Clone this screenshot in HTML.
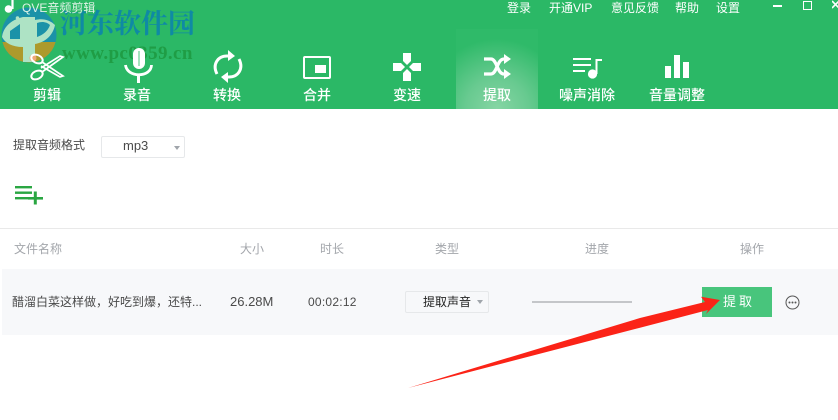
<!DOCTYPE html>
<html lang="zh">
<head>
<meta charset="utf-8">
<style>
html,body{margin:0;padding:0;background:#fff;}
#p{position:relative;width:838px;height:420px;overflow:hidden;background:#fff;font-family:"Liberation Sans","Noto Sans CJK SC",sans-serif;}
#p div,#p svg{position:absolute;}
.t{white-space:nowrap;line-height:1;}
.top{top:1px;font-size:12px;color:#fff;line-height:14px;white-space:nowrap;}
.nav{top:88px;width:80px;text-align:center;font-size:14px;font-weight:500;color:#fff;line-height:15px;white-space:nowrap;}
.th{top:242px;font-size:12px;color:#a3a6ab;line-height:14px;white-space:nowrap;}
.td{font-size:12px;color:#4a4a4a;line-height:14px;white-space:nowrap;}
</style>
</head>
<body>
<div id="p">
<div style="left:0;top:0;width:838px;height:109px;background:#2bb866;"></div>
<div style="left:456px;top:29px;width:82px;height:80px;background:radial-gradient(ellipse 70px 70px at 50% 100%,#86d5a4 0%,#68ca90 45%,#2fba69 100%);"></div>

<!-- logo -->
<svg style="left:0;top:6px" width="60" height="60" viewBox="0 0 60 60">
<circle cx="29" cy="29" r="27.5" fill="#1b92a8"/>
<path d="M2.4 36A27.5 27.5 0 0 0 55.6 36Z" fill="#ad9a2c"/>
<path d="M2 31C3 22 10 14 23 11H35V14C43 12 50 14 55 19C53 29 46 36 35 38V56H23V41C12 41 5 37 2 31Z" fill="#aee3c5"/>
<path d="M10 25L20 18V33H10Z" fill="#1b92a8"/>
<path d="M37 17C42 15 47 16 50 19C48 25 43 29 37 31Z" fill="#1b92a8"/>
<circle cx="17.5" cy="12" r="1.8" fill="#aee3c5"/>
<circle cx="33" cy="52" r="3.5" fill="#f0a878"/>
</svg>
<div class="t" style="left:60px;top:11px;font-family:'Liberation Serif','Noto Serif CJK SC',serif;font-size:27px;font-weight:700;color:#0f8aa4;">河东软件园</div>
<div class="t" style="left:62px;top:44px;font-family:'Liberation Serif',serif;font-size:19px;font-weight:700;letter-spacing:.4px;color:#1f9d45;">www.pc0359.cn</div>

<svg style="left:0;top:-3px" width="18" height="18" viewBox="0 0 18 18"><path d="M12.5 1V12" stroke="#fff" stroke-width="2.2" fill="none"/><path d="M12 2H16" stroke="#fff" stroke-width="2"/><circle cx="8.5" cy="12" r="3.8" fill="#fff"/></svg>
<div class="top" style="left:22px;color:#dff3e6;">QVE音频剪辑</div>
<div class="top" style="left:507px;">登录</div>
<div class="top" style="left:549px;">开通VIP</div>
<div class="top" style="left:611px;">意见反馈</div>
<div class="top" style="left:675px;">帮助</div>
<div class="top" style="left:716px;">设置</div>
<div style="left:773px;top:5px;width:9px;height:2px;background:#fff;"></div>
<div style="left:803px;top:1px;width:7px;height:7px;border:1px solid #fff;"></div>
<svg style="left:832px;top:0" width="6" height="10" viewBox="0 0 6 10"><path d="M0 1L7 8M7 1L0 8" stroke="#fff" stroke-width="1.6"/></svg>

<!-- scissors -->
<svg style="left:29px;top:52px" width="36" height="30" viewBox="0 0 36 30" fill="none" stroke="#fff" stroke-width="2">
<ellipse cx="8" cy="7" rx="6" ry="4" transform="rotate(25 8 7)"/>
<ellipse cx="8" cy="23" rx="6" ry="4" transform="rotate(-25 8 23)"/>
<path d="M13 10L34 24L31 25L12 14M13 20L34 5L31 4L12 16" stroke-width="1.7"/>
</svg>
<!-- mic -->
<svg style="left:123px;top:47px" width="30" height="37" viewBox="0 0 30 37">
<rect x="10" y="1" width="12" height="21" rx="6" fill="#fff"/>
<rect x="15.2" y="4" width="1.6" height="15" fill="#8fdcae"/>
<path d="M2.5 18C4 31 28 31 28.5 18" fill="none" stroke="#fff" stroke-width="2.8"/>
<path d="M15.5 27V36" stroke="#fff" stroke-width="3"/>
</svg>
<!-- convert -->
<svg style="left:213px;top:49px" width="30" height="35" viewBox="0 0 30 35" fill="none" stroke="#fff" stroke-width="3">
<path d="M4 25C-1 15 5 7 14 7H17"/><path d="M26 10C31 20 25 28 16 28H13"/>
<path d="M15 1L22 7L15 12Z" fill="#fff" stroke="none"/><path d="M15 23L8 28L15 34Z" fill="#fff" stroke="none"/>
</svg>
<!-- merge -->
<div style="left:303px;top:56px;width:24px;height:19px;border:2.5px solid #fff;border-radius:2px;"></div>
<div style="left:315px;top:65px;width:11px;height:8px;background:#fff;"></div>
<!-- speed -->
<svg style="left:393px;top:53px" width="28" height="28" viewBox="0 0 28 28" fill="#fff">
<path d="M10 0H18V8L14 12L10 8Z"/><path d="M10 28H18V20L14 16L10 20Z"/><path d="M0 10V18H8L12 14L8 10Z"/><path d="M28 10V18H20L16 14L20 10Z"/>
</svg>
<!-- shuffle -->
<svg style="left:484px;top:54px" width="28" height="25" viewBox="0 0 28 25" fill="none" stroke="#fff" stroke-width="3.2">
<path d="M0 5H7C13 5 13 20 20 20H23"/><path d="M0 20H7C13 20 13 5 20 5H23"/>
<path d="M20 0L27 5L20 10Z" fill="#fff" stroke="none"/><path d="M20 15L27 20L20 25Z" fill="#fff" stroke="none"/>
</svg>
<!-- noise -->
<svg style="left:573px;top:57px" width="30" height="22" viewBox="0 0 30 22" fill="#fff">
<rect x="0" y="1" width="18" height="2"/><rect x="0" y="7" width="18" height="2"/><rect x="0" y="13" width="12" height="2"/>
<rect x="22.5" y="2" width="2" height="15"/><rect x="22.5" y="2" width="6.5" height="2"/><circle cx="19.5" cy="17" r="4.6"/>
</svg>
<!-- volume -->
<div style="left:665px;top:66px;width:6px;height:12px;background:#fff;"></div>
<div style="left:674px;top:55px;width:6px;height:23px;background:#fff;"></div>
<div style="left:683px;top:62px;width:6px;height:16px;background:#fff;"></div>

<div class="nav" style="left:7px;">剪辑</div>
<div class="nav" style="left:97px;">录音</div>
<div class="nav" style="left:187px;">转换</div>
<div class="nav" style="left:277px;">合并</div>
<div class="nav" style="left:367px;">变速</div>
<div class="nav" style="left:457px;">提取</div>
<div class="nav" style="left:547px;">噪声消除</div>
<div class="nav" style="left:637px;">音量调整</div>

<!-- format -->
<div class="td" style="left:13px;top:138px;">提取音频格式</div>
<div style="left:101px;top:136px;width:82px;height:20px;border:1px solid #e6e8ea;border-radius:2px;"></div>
<div class="td" style="left:123px;top:139px;font-size:13px;">mp3</div>
<div style="left:174px;top:146px;width:0;height:0;border:3px solid transparent;border-top:4px solid #a0a5ab;"></div>

<!-- add list -->
<svg style="left:15px;top:185px" width="29" height="21" viewBox="0 0 29 21" fill="#2aa642">
<rect x="0" y="1" width="17" height="2.4"/><rect x="0" y="6.5" width="17" height="2.4"/><rect x="0" y="12" width="13" height="2.4"/>
<rect x="13" y="12" width="15" height="2.6"/><rect x="18.8" y="6.5" width="3" height="13"/>
</svg>

<div style="left:0;top:228px;width:838px;height:1px;background:#e9e9e9;"></div>

<div class="th" style="left:14px;">文件名称</div>
<div class="th" style="left:240px;">大小</div>
<div class="th" style="left:320px;">时长</div>
<div class="th" style="left:435px;">类型</div>
<div class="th" style="left:585px;">进度</div>
<div class="th" style="left:740px;">操作</div>

<div style="left:2px;top:269px;width:836px;height:66px;background:#f7f8fa;"></div>
<div class="td" style="left:12px;top:295px;">醋溜白菜这样做，好吃到爆，还特...</div>
<div class="td" style="left:230px;top:295px;font-size:13px;">26.28M</div>
<div class="td" style="left:308px;top:295px;letter-spacing:.25px;">00:02:12</div>
<div style="left:405px;top:291px;width:82px;height:20px;border:1px solid #e6e8ea;border-radius:2px;"></div>
<div class="td" style="left:423px;top:295px;color:#222;">提取声音</div>
<div style="left:477px;top:300px;width:0;height:0;border:3px solid transparent;border-top:4px solid #a0a5ab;"></div>
<div style="left:532px;top:301px;width:100px;height:2px;background:#c4c6c9;"></div>
<div style="left:702px;top:287px;width:70px;height:30px;background:#48c57c;"></div>
<div class="t" style="left:723px;top:295px;font-size:13px;letter-spacing:3px;color:#fff;">提取</div>
<svg style="left:785px;top:295px" width="15" height="15" viewBox="0 0 15 15"><circle cx="7.5" cy="7.5" r="6.5" fill="none" stroke="#555" stroke-width="1"/><circle cx="4.5" cy="7.5" r="1" fill="#555"/><circle cx="7.5" cy="7.5" r="1" fill="#555"/><circle cx="10.5" cy="7.5" r="1" fill="#555"/></svg>

<!-- arrow -->
<svg style="left:400px;top:295px" width="330" height="100" viewBox="0 0 330 100">
<path d="M8 93L240 23L305 7L301 1.7L320 5L306 19L308 15L240 32.7Z" fill="#fb2317"/>
</svg>
</div>
</body>
</html>
